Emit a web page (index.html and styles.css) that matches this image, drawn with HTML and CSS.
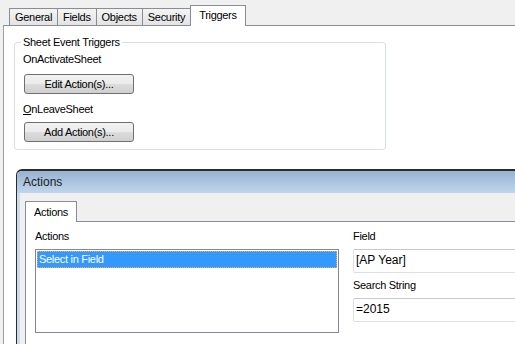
FILE: index.html
```html
<!DOCTYPE html>
<html>
<head>
<meta charset="utf-8">
<title>Sheet Properties - Triggers</title>
<link rel="stylesheet" href="styles.css">
</head>
<body>
<div class="tabs">
  <div class="tab">General</div>
  <div class="tab">Fields</div>
  <div class="tab">Objects</div>
  <div class="tab">Security</div>
  <div class="tab active">Triggers</div>
</div>
<div class="page">
  <div class="group">
    <div class="group-title">Sheet Event Triggers</div>
    <div class="event">OnActivateSheet</div>
    <button class="btn">Edit Action(s)...</button>
    <div class="event event-second"><u>O</u>nLeaveSheet</div>
    <button class="btn btn-second">Add Action(s)...</button>
  </div>
</div>

<div class="dialog">
  <div class="titlebar">Actions</div>
  <div class="client">
    <div class="tabs inner-tabs">
      <div class="tab active">Actions</div>
    </div>
    <div class="inner-page">
      <div class="col-list">
        <div class="label">Actions</div>
        <div class="listbox">
          <div class="item selected">Select in Field</div>
        </div>
      </div>
      <div class="col-props">
        <div class="label">Field</div>
        <div class="textbox">[AP Year]</div>
        <div class="label label-gap">Search String</div>
        <div class="textbox">=2015</div>
      </div>
    </div>
  </div>
</div>
</body>
</html>
```

FILE: styles.css
```css
html, body {
  margin: 0;
  height: 344px;
  overflow: hidden;
}
body {
  position: relative;
  background: #f0f0f0;
  font-family: "Liberation Sans", Arial, sans-serif;
  font-size: 11px;
  letter-spacing: -0.3px;
  color: #000;
}
* { box-sizing: border-box; }

/* tab strips */
.tabs {
  display: flex;
  align-items: flex-end;
  height: 25px;
  padding-left: 9px;
}
.tab {
  height: 17px;
  line-height: 16px;
  padding: 0 5px;
  margin-right: -1px;
  border: 1px solid #898c95;
  border-bottom: none;
  background: linear-gradient(#f4f4f4, #e3e3e3);
}
.tab.active {
  position: relative;
  z-index: 1;
  height: 21px;
  margin-bottom: -1px;
  padding: 0 8px;
  line-height: 18px;
  background: #fff;
}

.page {
  height: 319px;
  margin-left: 3px;
  padding-top: 16px;
  background: #fff;
  border-top: 1px solid #898c95;
  border-left: 1px solid #a0a0a0;
}

/* group box */
.group {
  width: 372px;
  height: 108px;
  margin-left: 10px;
  padding-left: 8px;
  border: 1px solid #d5dfe5;
  border-radius: 3px;
}
.group-title {
  display: table;
  margin: -7px 0 0 -2px;
  padding: 0 2px;
  line-height: 13px;
  background: #fff;
}
.event {
  margin-top: 4px;
  line-height: 13px;
}
.event-second { margin-top: 9px; }

.btn {
  display: block;
  width: 110px;
  height: 20px;
  margin: 8px 0 0 1px;
  padding: 0;
  font: inherit;
  letter-spacing: inherit;
  color: #000;
  border: 1px solid #707070;
  border-radius: 3px;
  background: linear-gradient(#f2f2f2 0%, #ebebeb 50%, #dddddd 50%, #cfcfcf 100%);
}
.btn-second { margin-top: 6px; }

/* the Actions dialog floats over the sheet properties */
.dialog {
  position: absolute;
  left: 16px;
  top: 169px;
  width: 520px;
  height: 175px;
  background: #cbdcef;
  border: 1px solid #2b2b2b;
  border-top-width: 2px;
  border-bottom: none;
  border-radius: 6px 6px 0 0;
  overflow: hidden;
}
.titlebar {
  height: 22px;
  padding-left: 6px;
  line-height: 22px;
  font-size: 12px;
  letter-spacing: 0;
  color: #1e1e1e;
  background: linear-gradient(#97b3d3, #bfd5eb);
}
.client {
  height: 151px;
  margin-left: 3px;
  background: #f0f0f0;
}
.inner-tabs {
  height: 28px;
  padding-left: 5px;
}
.inner-tabs .tab.active {
  height: 21px;
  padding: 0 8px;
  line-height: 20px;
}
.inner-page {
  display: flex;
  gap: 14px;
  height: 123px;
  margin-left: 5px;
  padding: 8px 0 0 9px;
  background: #fff;
  border-top: 1px solid #898c95;
  border-left: 1px solid #898c95;
}
.label { line-height: 13px; }
.label-gap { margin-top: 6px; }

.col-list { flex: none; width: 304px; }
.listbox {
  height: 84px;
  margin-top: 6px;
  padding: 1px;
  border: 1px solid #828790;
}
.item {
  height: 17px;
  padding-left: 2px;
  line-height: 16px;
}
.item.selected {
  color: #fff;
  background: #3399ff;
  outline: 1px dotted #f0b050;
  outline-offset: -1px;
}

.col-props { flex: none; width: 200px; }
.textbox {
  height: 24px;
  margin-top: 6px;
  padding-left: 2px;
  line-height: 21px;
  font-size: 12px;
  letter-spacing: 0;
  border: 1px solid #dcdfe3;
  border-top-color: #c5c8cd;
  border-radius: 2px;
}
```
